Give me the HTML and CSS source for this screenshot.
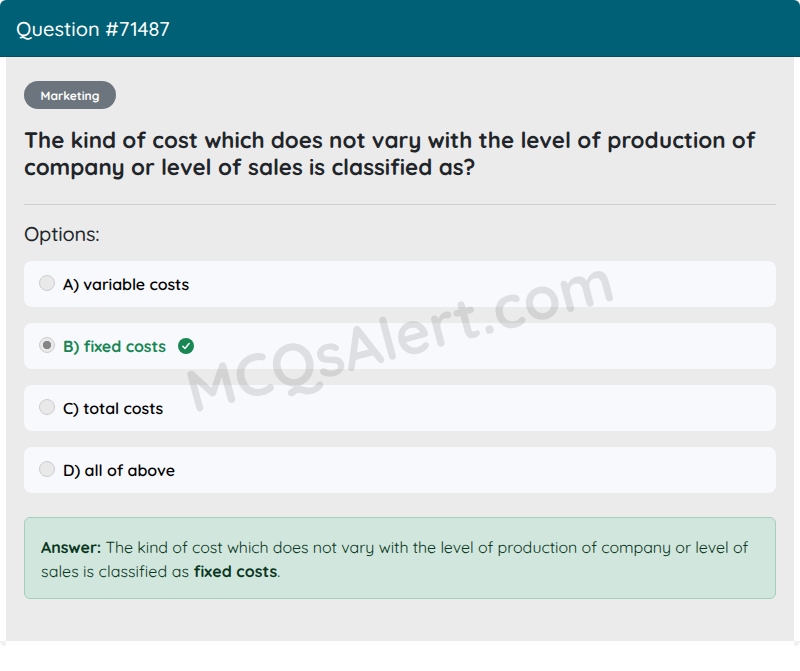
FILE: index.html
```
<!DOCTYPE html>
<html lang="en">
<head>
  <meta charset="UTF-8">
  <meta name="viewport" content="width=device-width, initial-scale=1.0">
  <title>Question #71487</title>
  <link rel="stylesheet" href="styles.css">
</head>
<body>
  <div class="card">
    <div class="card-header">Question #71487</div>
    <div class="card-body">
      <span class="badge">Marketing</span>
      <h1 class="question">The kind of cost which does not vary with the level of production of company or level of sales is classified as?</h1>
      <hr>
      <h2 class="options-title">Options:</h2>
      <div class="options">
        <label class="option">
          <input type="radio" name="answer" disabled>
          <span>A) variable costs</span>
        </label>
        <label class="option correct">
          <input type="radio" name="answer" checked disabled>
          <span>B) fixed costs</span>
          <svg class="check" viewBox="0 0 16 16" width="16" height="16">
            <circle cx="8" cy="8" r="8" fill="#198754"/>
            <path d="M4.8 8.2 L7 10.5 L11.1 5.5" fill="none" stroke="#fff" stroke-width="1.5" stroke-linecap="round" stroke-linejoin="round"/>
          </svg>
        </label>
        <label class="option">
          <input type="radio" name="answer" disabled>
          <span>C) total costs</span>
        </label>
        <label class="option">
          <input type="radio" name="answer" disabled>
          <span>D) all of above</span>
        </label>
      </div>
      <div class="answer">
        <strong>Answer:</strong> The kind of cost which does not vary with the level of production of company or level of <span class="last-line">sales is classified as <strong>fixed costs</strong>.</span>
      </div>
    </div>
    <div class="card-end"><span class="corner corner-left"></span><span class="corner corner-right"></span></div>
    <div class="watermark">MCQsAlert.com</div>
  </div>
</body>
</html>
```
FILE: styles.css
```
* {
  box-sizing: border-box;
}
body {
  margin: 0;
  background-color: #fff;
  color: #212529;
  font-family: Quicksand, Lato, sans-serif;
  font-size: 16px;
  line-height: 24px;
  text-rendering: geometricPrecision;
  font-variant-ligatures: none;
}
.card {
  position: relative;
}
.card-header {
  height: 57px;
  padding: 17px 16px 0;
  background-color: #006075;
  border-bottom: 1px solid #00505f;
  border-radius: 6px 6px 0 0;
  color: #fff;
  font-size: 20px;
  font-weight: 500;
  letter-spacing: 0.05px;
}
.card-body {
  height: 584px;
  margin: 0 6px;
  padding: 24px 18px 0;
  background-color: #ebebeb;
}
.badge {
  display: block;
  width: 92px;
  height: 28px;
  border-radius: 14px;
  background-color: #6c757d;
  color: #fff;
  font-size: 12px;
  font-weight: bold;
  line-height: 29px;
  text-align: center;
}
.question {
  margin: 18px 0 23px;
  font-size: 22.4px;
  font-weight: bold;
  line-height: 27px;
}
hr {
  height: 1px;
  margin: 0;
  border: 0;
  background-color: #cdcecf;
}
.options-title {
  margin: 17px 0 15px;
  font-size: 20px;
  font-weight: 500;
  line-height: 24px;
  letter-spacing: -0.2px;
}
.options {
  display: grid;
  gap: 16px;
}
.option {
  display: flex;
  align-items: center;
  height: 46px;
  padding-left: 15px;
  border-radius: 8px;
  background-color: #f8f9fd;
  color: #000;
  font-weight: 600;
  letter-spacing: -0.06px;
}
.option input {
  appearance: none;
  width: 16px;
  height: 16px;
  margin: -3px 8px 0 0;
  border: 1px solid #cdcdcf;
  border-radius: 50%;
  background-color: #e9e9ea;
}
.option input:checked {
  background-image: radial-gradient(circle, #858585 3.8px, transparent 4.5px);
}
.correct {
  color: #198754;
  font-weight: bold;
}
.check {
  margin-left: 12px;
}
.answer {
  height: 82px;
  margin-top: 24px;
  padding: 17px 16px;
  border: 1px solid #a3cfbb;
  border-radius: 6px;
  background-color: #d1e7dd;
  color: #0a3622;
  letter-spacing: -0.06px;
}
.last-line {
  letter-spacing: 0.06px;
}
/* bottom corners of the card */
.card-end {
  display: flex;
  justify-content: space-between;
}
.corner {
  width: 6px;
  height: 5px;
  background-color: #f0f0f0;
}
.corner-left {
  border-bottom-left-radius: 6px;
}
.corner-right {
  border-bottom-right-radius: 6px;
}
.watermark {
  position: absolute;
  top: 302px;
  left: 180px;
  width: 426px;
  color: rgba(0, 0, 0, 0.1);
  font-size: 60px;
  font-weight: bold;
  line-height: 70px;
  text-align: center;
  white-space: nowrap;
  transform: rotate(-15deg);
  pointer-events: none;
}
```
